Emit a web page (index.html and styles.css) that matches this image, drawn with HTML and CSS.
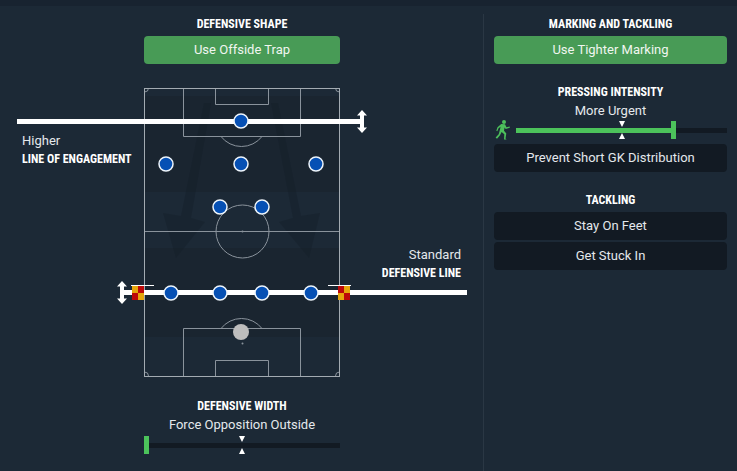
FILE: index.html
```html
<!DOCTYPE html>
<html lang="en">
<head>
    <meta charset="UTF-8">
    <meta name="viewport" content="width=device-width, initial-scale=1.0">
    <title>Out of Possession</title>
    <link rel="stylesheet" href="styles.css">
</head>
<body>
    <main class="tactics">
        <section class="panel shape-panel">
            <div class="narrow">
                <h2>Defensive Shape</h2>
                <button type="button" class="option selected" aria-pressed="true">Use Offside Trap</button>
            </div>

            <div class="board">
                <svg class="pitch" viewBox="17 86 450 292" role="img" aria-label="Defensive formation">
                    <defs>
                        <g id="player"><circle r="7" fill="#0650b4" stroke="#eef5fb" stroke-width="1.5"/></g>
                        <g id="handle"><path d="M0-11.5 5-6H2V6H5L0 11.5-5 6H-2V-6H-5z" fill="#fff"/></g>
                    </defs>

                    <!-- grass -->
                    <rect x="144" y="88" width="196" height="289" fill="#1c2936"/>
                    <rect x="144" y="96" width="196" height="96" fill="#1a2530"/>
                    <rect x="144" y="248" width="196" height="89" fill="#1a2530"/>
                    <g fill="#141d28" opacity=".4">
                        <path d="M204 103h7L191 218l14 4-29 36-13-45 18 3z"/>
                        <path d="M271 103h7l23 113 19-3-11 45-30-36 14-4z"/>
                    </g>

                    <!-- markings -->
                    <g fill="none" stroke="#8a939c" stroke-width="1">
                        <path d="M183.500 88v48.500h117V88M215.500 88v16.500h53V88M221 136.500a26 26 0 0 0 41 0"/>
                        <path d="M183.500 376v-47.500h117V376M215.500 376v-15.500h53V376M221 328.500a26 26 0 0 1 41 0"/>
                        <path d="M144 231.500h196M148.500 88a4 4 0 0 1-4 4M335.500 88a4 4 0 0 0 4 4M148.500 376a4 4 0 0 0-4-4M335.500 376a4 4 0 0 1 4-4"/>
                        <circle cx="242.500" cy="231.500" r="26.500"/>
                        <rect x="144.500" y="88.500" width="195" height="288" stroke="#a3abb2"/>
                    </g>
                    <circle cx="242.500" cy="231.500" r="1" fill="#8a939c"/>
                    <circle cx="242.500" cy="343.500" r="1" fill="#8a939c"/>

                    <!-- line of engagement -->
                    <rect x="17" y="119" width="345" height="5" fill="#fff"/>
                    <use href="#handle" x="362" y="121.500"/>

                    <!-- defensive line -->
                    <rect x="122" y="290" width="345" height="5" fill="#fff"/>
                    <use href="#handle" x="122" y="292.500"/>

                    <!-- offside flags -->
                    <path d="M131 285h23v1h-23zM328 285h23v1h-23z" fill="#fff"/>
                    <path d="M132 286h12v14h-12zM338 286h12v14h-12z" fill="#e6a60c"/>
                    <path d="M138 286h6v7h-6zM132 293h6v7h-6zM338 286h6v7h-6zM344 293h6v7h-6z" fill="#bd0808"/>

                    <use href="#player" x="241" y="121"/>
                    <use href="#player" x="166" y="164"/>
                    <use href="#player" x="241" y="164"/>
                    <use href="#player" x="316" y="164"/>
                    <use href="#player" x="220" y="207"/>
                    <use href="#player" x="262" y="207"/>
                    <use href="#player" x="171" y="293"/>
                    <use href="#player" x="220" y="293"/>
                    <use href="#player" x="262" y="293"/>
                    <use href="#player" x="311" y="293"/>
                    <circle cx="241" cy="332" r="8" fill="#bdbdbd"/>
                </svg>
                <div class="line-label engagement">
                    <p>Higher</p>
                    <h3>Line of Engagement</h3>
                </div>
                <div class="line-label defensive">
                    <p>Standard</p>
                    <h3>Defensive Line</h3>
                </div>
            </div>

            <div class="narrow">
                <h2><label for="width">Defensive Width</label></h2>
                <p>Force Opposition Outside</p>
                <div class="slider">
                    <input type="range" id="width" class="at-0" min="0" max="100" value="0">
                    <svg class="midpoint" viewBox="0 0 6 18" aria-hidden="true"><path d="M0 0h6L3 6zM0 18h6L3 12z"/></svg>
                </div>
            </div>
        </section>

        <section class="panel marking-panel">
            <div class="group">
                <h2>Marking and Tackling</h2>
                <button type="button" class="option selected" aria-pressed="true">Use Tighter Marking</button>
            </div>

            <div class="group">
                <h2><label for="pressing">Pressing Intensity</label></h2>
                <p>More Urgent</p>
                <div class="slider-row">
                    <svg class="runner" viewBox="0 0 16 20" aria-hidden="true">
                        <circle cx="9" cy="2" r="2"/>
                        <path d="M6.200 4 10 4.300 11.500 7.300 14.800 6.500V7.700L10.700 8.900 9.600 7.600 9 10.700 11.300 13.400 10.500 18.500 11.600 19.600H9L9.300 14.300 6.600 12 5 15.200 2 18.800.600 17.600 3.700 14.300 5 9.500 5.500 6.700 3.600 8.200 2.300 11.200 1.300 10.700 2.500 7.200z"/>
                    </svg>
                    <div class="slider">
                        <input type="range" id="pressing" class="at-75" min="0" max="100" value="75">
                        <svg class="midpoint" viewBox="0 0 6 18" aria-hidden="true"><path d="M0 0h6L3 6zM0 18h6L3 12z"/></svg>
                    </div>
                </div>
                <button type="button" class="option" aria-pressed="false">Prevent Short GK Distribution</button>
            </div>

            <div class="group">
                <h2>Tackling</h2>
                <button type="button" class="option" aria-pressed="false">Stay On Feet</button>
                <button type="button" class="option" aria-pressed="false">Get Stuck In</button>
            </div>
        </section>
    </main>
</body>
</html>
```

FILE: styles.css
```css
* {
    box-sizing: border-box;
}
body {
    margin: 0;
    min-height: 100vh;
    padding-top: 6px;
    background-color: #182330;
    color: #e4e8ec;
    font-family: Roboto, "Liberation Sans", sans-serif;
    font-size: 13px;
    line-height: 18px;
}
.tactics {
    display: grid;
    grid-template-columns: 483fr 254fr;
    min-height: calc(100vh - 6px);
    background-color: #1c2936;
}
h2, h3, p {
    margin: 0;
    font-size: 13px;
}
h2, h3 {
    color: #ffffff;
    font-family: "Roboto Condensed", "Liberation Sans Narrow", "Liberation Sans", sans-serif;
    font-size: 12px;
    font-weight: bold;
    text-transform: uppercase;
    white-space: nowrap;
}
.panel {
    padding-top: 8px;
    text-align: center;
}
.shape-panel {
    display: flex;
    flex-direction: column;
    align-items: center;
    padding-left: 1px;
}
.narrow {
    width: 196px;
}
.narrow h2, .group h2 {
    line-height: 20px;
}
.marking-panel {
    display: flex;
    flex-direction: column;
    gap: 18px;
    margin-top: 8px;
    padding: 0 10px;
    border-left: 1px solid #2a3744;
}
.option {
    display: block;
    width: 100%;
    height: 28px;
    margin-top: 2px;
    padding: 0;
    border: none;
    border-radius: 4px;
    background-color: #121a23;
    color: #e4e8ec;
    font: inherit;
    cursor: pointer;
}
.option.selected {
    background-color: #489b56;
    color: #f0f6f0;
}
.board {
    position: relative;
    width: 450px;
    max-width: 100%;
    margin: 22px 0 18px;
}
.pitch {
    display: block;
    width: 100%;
}
.line-label {
    position: absolute;
    line-height: 19px;
}
.engagement {
    top: 45px;
    left: 5px;
    text-align: left;
}
.defensive {
    top: 159px;
    right: 6px;
    text-align: right;
}
.slider-row {
    display: flex;
    align-items: center;
    gap: 4px;
    margin-bottom: 4px;
}
.runner {
    flex: none;
    width: 18px;
    height: 20px;
    fill: #4cbf5b;
}
.slider {
    position: relative;
    flex: 1;
    height: 18px;
}
.slider input {
    display: block;
    width: 100%;
    height: 18px;
    margin: 0;
    appearance: none;
    background: linear-gradient(#121a23, #121a23) center / 100% 5px no-repeat;
}
.narrow .slider {
    margin-top: 2px;
}
.slider .at-75 {
    background-image: linear-gradient(to right, #4cc35b 75%, #121a23 75%);
}
.slider input::-webkit-slider-thumb {
    appearance: none;
    width: 5px;
    height: 18px;
    background-color: #4cc35b;
}
.midpoint {
    position: absolute;
    top: 0;
    left: 50%;
    width: 6px;
    height: 18px;
    margin-left: -3px;
    fill: #ffffff;
    pointer-events: none;
}
```
